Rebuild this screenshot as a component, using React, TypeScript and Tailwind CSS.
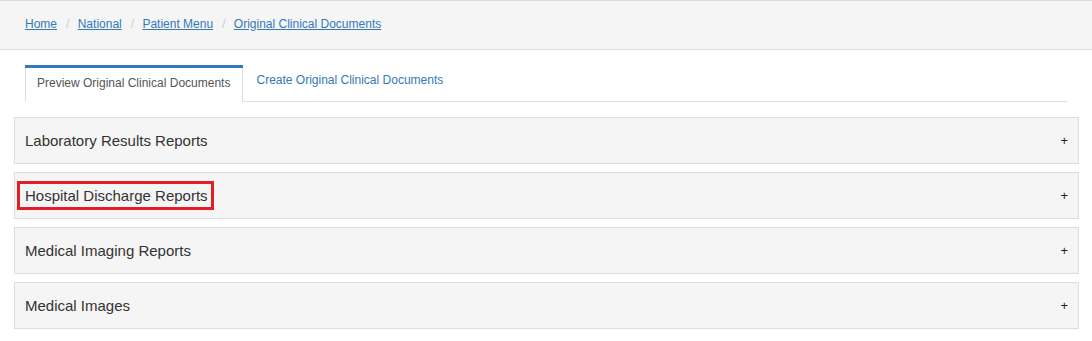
import React from "react";

const crumbs = ["Home", "National", "Patient Menu", "Original Clinical Documents"];
const panels = [
  "Laboratory Results Reports",
  "Hospital Discharge Reports",
  "Medical Imaging Reports",
  "Medical Images",
];

export default function App() {
  return (
    <div className="min-h-[341px] bg-white font-['Liberation_Sans',Arial,sans-serif]">
      <div className="h-[50px] border-y border-[#dddddd] bg-[#f5f5f5] flex items-center pl-[25px] pb-[3px] text-[12px]">
        {crumbs.map((c, i) => (
          <span key={c} className="flex items-center">
            {i > 0 && (
              <span className="text-[#cccccc] pl-[9px] pr-[5px] whitespace-pre">/{"\u00a0"}</span>
            )}
            <a href="#" className="text-[#337ab7] underline">
              {c}
            </a>
          </span>
        ))}
      </div>

      <div className="mt-[15px] mx-[25px] border-b border-[#dddddd] flex items-start text-[12px] leading-[17px]">
        <div className="mr-[2px] -mb-px h-[37px] border-t-[3px] border-[#337ab7] w-[217.5px]">
          <div className="h-full border-x border-[#dddddd] border-b border-b-white bg-white px-[11px] pt-[7px] text-[#555555] whitespace-nowrap">
            Preview Original Clinical Documents
          </div>
        </div>
        <a href="#" className="border border-transparent px-[11px] pt-[6px] text-[#337ab7] whitespace-nowrap">
          Create Original Clinical Documents
        </a>
      </div>

      <div className="mt-[15px] ml-[14px] mr-[13px] flex flex-col gap-[8px]">
        {panels.map((p, i) => (
          <div
            key={p}
            className="h-[47px] border border-[#dddddd] bg-[#f5f5f5] flex items-center justify-between px-[10px] text-[#333333]"
          >
            <span className="relative text-[15px] leading-[20px]">
              {p}
              {i === 1 && (
                <span className="absolute left-[-8px] right-[-6px] top-[-5px] bottom-[-4px] border-[3px] border-[#e31e24]" />
              )}
            </span>
            <span className="text-[13px] leading-[13px] text-[#222222]">+</span>
          </div>
        ))}
      </div>
    </div>
  );
}
